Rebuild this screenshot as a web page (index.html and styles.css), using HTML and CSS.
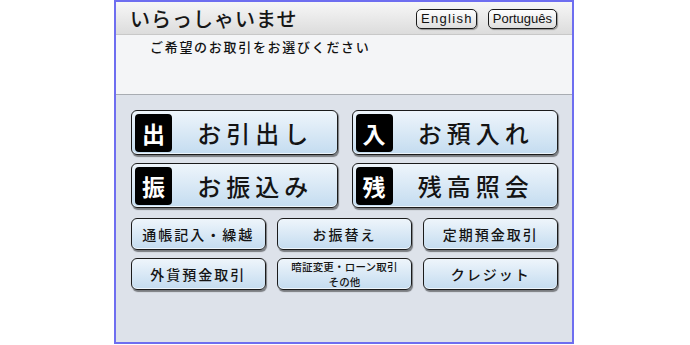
FILE: index.html
```html
<!DOCTYPE html>
<html lang="ja">
<head>
<meta charset="utf-8">
<title>ATM</title>
<link rel="stylesheet" href="styles.css">
</head>
<body>
<div class="screen">
  <div class="header">
    <h1 class="title">いらっしゃいませ</h1>
    <div class="langs">
      <button class="lang lang-en">English</button>
      <button class="lang">Português</button>
    </div>
  </div>
  <div class="message">ご希望のお取引をお選びください</div>
  <div class="menu">
    <div class="big-grid">
      <button class="btn big"><span class="icon">出</span><span class="label">お引出し</span></button>
      <button class="btn big"><span class="icon">入</span><span class="label">お預入れ</span></button>
      <button class="btn big"><span class="icon">振</span><span class="label">お振込み</span></button>
      <button class="btn big"><span class="icon">残</span><span class="label">残高照会</span></button>
    </div>
    <div class="small-grid">
      <button class="btn small">通帳記入・繰越</button>
      <button class="btn small">お振替え</button>
      <button class="btn small">定期預金取引</button>
      <button class="btn small">外貨預金取引</button>
      <button class="btn small two-line"><span class="line">暗証変更・ローン取引</span><span class="line">その他</span></button>
      <button class="btn small">クレジット</button>
    </div>
  </div>
</div>
</body>
</html>
```

FILE: styles.css
```css
* { box-sizing: border-box; }
html, body { margin: 0; padding: 0; background: #fff; }
body {
  font-family: "Noto Sans CJK JP", "Noto Sans", sans-serif;
  color: #111;
}
.screen {
  width: 460px;
  height: 344px;
  margin-left: 114px;
  border: 2px solid #6e6ef0;
  display: flex;
  flex-direction: column;
  background: #dde2ea;
}
.header {
  height: 33px;
  flex: none;
  display: flex;
  align-items: center;
  justify-content: space-between;
  padding: 0 15px 0 14px;
  background: linear-gradient(#f7f7f7, #dcdcdc);
  border-bottom: 1px solid #c8c8c8;
}
.title {
  margin: 0;
  font-size: 20px;
  font-weight: 500;
  letter-spacing: 1px;
  line-height: 1;
  padding-top: 2px;
  color: #161616;
}
.langs {
  display: flex;
  gap: 11px;
  padding-top: 1px;
}
.lang {
  font-family: "Liberation Sans", Arial, sans-serif;
  font-size: 13px;
  height: 20px;
  padding: 0 4px;
  line-height: 16px;
  border: 1.5px solid #1a1a1a;
  border-radius: 5px;
  background: linear-gradient(#ffffff, #dedede);
  box-shadow: 1px 1px 1px rgba(0,0,0,0.35);
  color: #111;
}
.lang-en { letter-spacing: 1.3px; padding: 0 3px 0 4px; }
.message {
  height: 60px;
  flex: none;
  background: #f4f5f7;
  border-bottom: 1px solid #a8acb2;
  padding: 3px 0 0 34px;
  font-size: 13px;
  font-weight: 500;
  letter-spacing: 1.7px;
  line-height: 18px;
}
.menu {
  padding: 15px 14px 0 15px;
}
.btn {
  font-family: "Noto Sans CJK JP", "Noto Sans", sans-serif;
  color: #141414;
  border: 1.5px solid #1b1b1b;
  border-radius: 6px;
  background: linear-gradient(#eef5fb, #c4dcf0);
  box-shadow: 1px 1.5px 1px rgba(0,0,0,0.45), inset 0 -1px 0 rgba(255,255,255,0.7);
  padding: 0;
  margin: 0;
}
.big-grid {
  display: grid;
  grid-template-columns: 1fr 1fr;
  column-gap: 14px;
  row-gap: 8px;
}
.big {
  height: 45px;
  display: flex;
  align-items: center;
  padding-left: 3px;
}
.icon {
  width: 37px;
  height: 38px;
  background: #000;
  color: #fff;
  border-radius: 4px;
  font-size: 23px;
  font-weight: 700;
  display: flex;
  align-items: center;
  justify-content: center;
  flex: none;
}
.label {
  flex: 1;
  text-align: center;
  font-size: 24px;
  font-weight: 500;
  letter-spacing: 5px;
  padding-left: 2px;
  line-height: 1;
}
.small-grid {
  margin-top: 10px;
  display: grid;
  grid-template-columns: 1fr 1fr 1fr;
  column-gap: 11.5px;
  row-gap: 8px;
}
.small {
  height: 32px;
  font-size: 14px;
  font-weight: 500;
  letter-spacing: 2px;
  line-height: 1;
  text-align: center;
}
.two-line {
  display: flex;
  flex-direction: column;
  align-items: center;
  justify-content: center;
  font-size: 10.5px;
  letter-spacing: 0.2px;
  line-height: 15.2px;
}
.line { display: block; }
```
